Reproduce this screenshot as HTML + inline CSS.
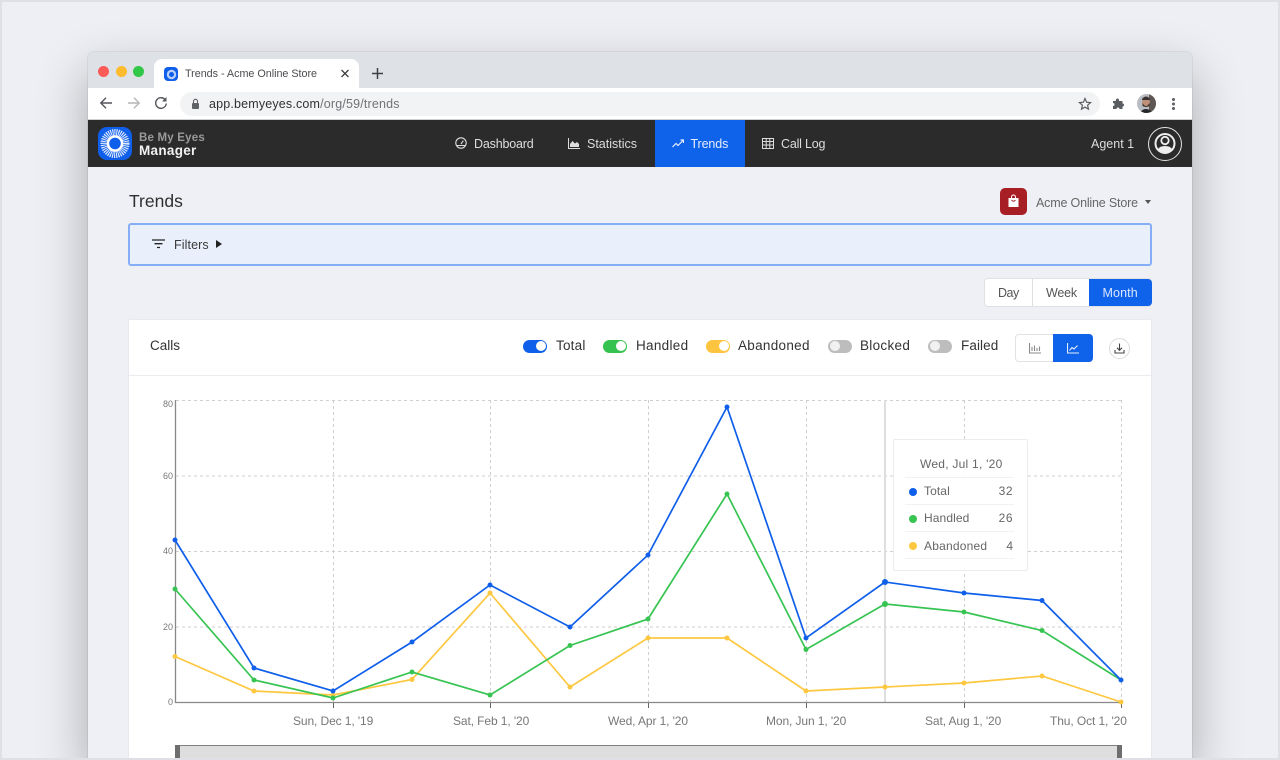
<!DOCTYPE html>
<html><head><meta charset="utf-8"><style>
html,body{margin:0;padding:0;width:1280px;height:760px;overflow:hidden}
#root{position:relative;width:1280px;height:760px;overflow:hidden;background:#eeeff4;font-family:"Liberation Sans",sans-serif;color:#333}
.a{position:absolute;white-space:nowrap}
.frame{position:absolute;left:0;top:0;width:1280px;height:760px;border:2px solid #dfdfe6;box-sizing:border-box;z-index:10;pointer-events:none}
.win{position:absolute;left:88px;top:52px;width:1104px;height:708px;background:#eff0f5;border-radius:5px 5px 0 0;box-shadow:0 0 1px rgba(0,0,0,.35),0 20px 50px rgba(0,0,0,.3)}
.nav{font-size:12.5px;line-height:16px;color:#ddd}
.tog{position:absolute;top:339.5px;width:24px;height:13.5px;border-radius:7px}
.tog i{position:absolute;top:1.75px;right:1.5px;width:10px;height:10px;border-radius:50%;background:#fff}
.tog.off{background:#bdbdbd}.tog.off i{right:auto;left:1.5px;background:#f1f1f1}
.lbl{font-size:13.5px;line-height:16px;color:#333;top:338px;letter-spacing:.3px}
.tick{font-size:12px;color:#777;top:714px;line-height:14px;letter-spacing:-.1px}
.yt{font-size:9px;color:#777;line-height:10px;text-align:right;width:20px;left:153px}
</style></head><body><div id="root">
<div class="win"></div>
<div class="a" style="left:88px;top:52px;width:1104px;height:36px;background:#dee1e6;border-radius:5px 5px 0 0"></div>
<div class="a" style="left:98px;top:65.5px;width:11px;height:11px;border-radius:50%;background:#fc5a57"></div>
<div class="a" style="left:115.5px;top:65.5px;width:11px;height:11px;border-radius:50%;background:#fdbb2e"></div>
<div class="a" style="left:132.5px;top:65.5px;width:11px;height:11px;border-radius:50%;background:#33c748"></div>
<div class="a" style="left:154px;top:59px;width:205px;height:29px;background:#fff;border-radius:8px 8px 0 0"></div>
<div class="a" style="left:164px;top:67px;width:14px;height:14px;border-radius:4px;background:#0f5fea"></div>
<div class="a" style="left:168.5px;top:71.5px;width:5px;height:5px;border-radius:50%;background:#0f5fea;box-shadow:0 0 0 2.2px #b8d0fb"></div>
<div class="a" style="left:185px;top:67px;font-size:10.8px;line-height:14px;color:#4a4c50;letter-spacing:-.03px">Trends - Acme Online Store</div>
<svg class="a" style="left:340px;top:68px" width="10" height="11" viewBox="0 0 10 11"><path d="M1.5 2L8.5 9M8.5 2L1.5 9" stroke="#3c3f43" stroke-width="1.3" fill="none"/></svg>
<svg class="a" style="left:371px;top:67px" width="13" height="13" viewBox="0 0 13 13"><path d="M6.5 1V12M1 6.5H12" stroke="#3c3f43" stroke-width="1.5" fill="none"/></svg>
<div class="a" style="left:88px;top:88px;width:1104px;height:31px;background:#fff;border-bottom:1px solid #d0d1d4"></div>
<svg class="a" style="left:99px;top:96px" width="14" height="14" viewBox="0 0 14 14"><path d="M13 7H2M7 1.800L1.800 7L7 12.200" stroke="#54575b" stroke-width="1.400" fill="none"/></svg>
<svg class="a" style="left:127px;top:96px" width="14" height="14" viewBox="0 0 14 14"><path d="M1 7H12M7 1.800L12.200 7L7 12.200" stroke="#b4b6b9" stroke-width="1.400" fill="none"/></svg>
<svg class="a" style="left:154px;top:96px" width="14" height="14" viewBox="0 0 14 14"><path d="M11.500 4.200A5.300 5.300 0 1 0 12.300 7.500" stroke="#54575b" stroke-width="1.400" fill="none"/><path d="M12.500 1V5.500H8Z" fill="#54575b"/></svg>
<div class="a" style="left:180px;top:92px;width:920px;height:24px;border-radius:12px;background:#f1f3f4"></div>
<svg class="a" style="left:191px;top:98px" width="9" height="12" viewBox="0 0 9 12"><path d="M2.500 5V3.300a2 2 0 0 1 4 0V5" stroke="#5f6368" stroke-width="1.100" fill="none"/><rect x="1" y="5" width="7" height="6" rx="1" fill="#5f6368"/></svg>
<div class="a" style="left:209px;top:96px;font-size:12.5px;line-height:16px;color:#303134;letter-spacing:.17px">app.bemyeyes.com<span style="color:#717377">/org/59/trends</span></div>
<svg class="a" style="left:1078px;top:97px" width="14" height="14" viewBox="0 0 14 14"><path d="M7 1.500L8.600 5.200L12.600 5.600L9.600 8.200L10.500 12.200L7 10.100L3.500 12.200L4.400 8.200L1.400 5.600L5.400 5.200Z" stroke="#5a5d61" stroke-width="1.200" fill="none"/></svg>
<svg class="a" style="left:1112px;top:97px" width="14" height="13" viewBox="0 0 14 13"><path d="M1 4H4A1.500 1.500 0 0 1 7 2.500V4H10.500V6.500A1.500 1.500 0 0 1 10.500 9.500V12H7.500A1.500 1.500 0 0 0 4.500 12H1V9A1.500 1.500 0 0 0 1 6Z" fill="#5a5d61"/></svg>
<svg class="a" style="left:1137px;top:94px" width="19" height="19" viewBox="0 0 19 19"><defs><clipPath id="c"><circle cx="9.500" cy="9.500" r="9.500"/></clipPath></defs><g clip-path="url(#c)"><rect width="19" height="19" fill="#b9bcc2"/><rect x="12" width="7" height="19" fill="#5d5652"/><ellipse cx="9" cy="8" rx="4" ry="5" fill="#bd8f78"/><path d="M5 5Q9 0 13 5V6H5Z" fill="#3a3230"/><path d="M5.500 9Q9 15 12.500 9L12.500 12Q9 14 5.500 12Z" fill="#3f332e"/><path d="M2 19Q9 11 16 19Z" fill="#26272a"/></g></svg>
<div class="a" style="left:1172px;top:98px;width:3px;height:3px;border-radius:50%;background:#5a5d61;box-shadow:0 4.500px 0 #5a5d61,0 9px 0 #5a5d61"></div>

<div class="a" style="left:88px;top:120px;width:1104px;height:47px;background:#2b2b2b"></div>
<div class="a" style="left:655px;top:120px;width:90px;height:47px;background:#0f62ea"></div>
<svg class="a" style="left:98px;top:127px" width="34" height="33" viewBox="0 0 34 33"><rect width="34" height="33" rx="9" fill="#0f5fea"/><circle cx="17" cy="16.500" r="10.500" fill="none" stroke="#dfe9ff" stroke-width="8" stroke-dasharray="1 .8"/><circle cx="17" cy="16.500" r="7" fill="none" stroke="#fff" stroke-width="2.500"/><circle cx="17" cy="16.500" r="5.600" fill="#0f5fea"/></svg>
<div class="a" style="left:139px;top:131px;font-size:11.5px;line-height:14px;font-weight:700;color:#9a9a9a;letter-spacing:.2px">Be My Eyes</div>
<div class="a" style="left:139px;top:143px;font-size:13.5px;line-height:16px;font-weight:700;color:#f2f2f2;letter-spacing:.3px">Manager</div>

<svg class="a" style="left:455px;top:137px" width="12" height="12" viewBox="0 0 12 12"><circle cx="6" cy="6" r="5.200" fill="none" stroke="#ddd" stroke-width="1.100"/><path d="M1 8.500H11M6 7L8.300 3.700" stroke="#ddd" stroke-width="1.100"/></svg>
<div class="a nav" style="left:474px;top:136px;letter-spacing:-.18px">Dashboard</div>
<svg class="a" style="left:568px;top:138px" width="12" height="11" viewBox="0 0 12 11"><path d="M.5 0V10.500H12" stroke="#ddd" fill="none"/><path d="M2 9V6L4.500 3L7 5.500L9 4L11 6V9Z" fill="#ddd"/></svg>
<div class="a nav" style="left:587px;top:136px">Statistics</div>
<svg class="a" style="left:671.5px;top:139px" width="12" height="9" viewBox="0 0 12 9"><path d="M.5 8L4 4.500L6 6.500L11 1.500M8.500 1H11.500V4" stroke="#e6eeff" stroke-width="1.200" fill="none"/></svg>
<div class="a nav" style="left:690.5px;top:136px;color:#e6eeff;letter-spacing:-.12px">Trends</div>
<svg class="a" style="left:762px;top:138px" width="12" height="11" viewBox="0 0 12 11"><path d="M.5.500H11.500V10.500H.5ZM.5 3.500H11.500M.5 7H11.500M4.200 .5V10.500M7.800 .5V10.500" stroke="#ddd" fill="none"/></svg>
<div class="a nav" style="left:781px;top:136px;letter-spacing:-.2px">Call Log</div>
<div class="a nav" style="left:1091px;top:136px;letter-spacing:0">Agent 1</div>
<svg class="a" style="left:1148px;top:127px" width="34" height="34" viewBox="0 0 34 34"><circle cx="17" cy="17" r="16.500" fill="none" stroke="#e4e4e4"/><circle cx="17" cy="16.500" r="9.500" fill="#2b2b2b" stroke="#eee" stroke-width="2"/><circle cx="17" cy="13.500" r="3.700" fill="none" stroke="#eee" stroke-width="1.800"/><path d="M10 22Q12 19 17 19T24 22Q21 25.500 17 25.500T10 22Z" fill="#eee"/></svg>

<div class="a" style="left:129px;top:191px;font-size:17.5px;line-height:21px;color:#2f2f2f">Trends</div>
<div class="a" style="left:1000px;top:188px;width:27px;height:27px;border-radius:5px;background:#a71f24"></div>
<svg class="a" style="left:1007px;top:194px" width="13" height="14" viewBox="0 0 13 14"><path d="M4.500 4V3a2 2 0 0 1 4 0V4" stroke="#fff" fill="none"/><path d="M1.500 4H11.500V13H1.500Z" fill="#fff"/><path d="M4.500 6Q6.500 8.500 8.500 6" stroke="#a71f24" fill="none"/></svg>
<div class="a" style="left:1036px;top:194.5px;font-size:12.5px;line-height:16px;color:#666;letter-spacing:-.18px">Acme Online Store</div>
<div class="a" style="left:1145px;top:200px;width:0;height:0;border:3.5px solid transparent;border-top:4px solid #555;border-bottom:0"></div>

<div class="a" style="left:128px;top:223px;width:1024px;height:43px;box-sizing:border-box;background:#e9f0fc;border:2px solid #84aef5;border-radius:3px"></div>
<svg class="a" style="left:152px;top:239px" width="13" height="10" viewBox="0 0 13 10"><path d="M0 1H13M2.500 4.700H10.500M5 8.500H8" stroke="#222" stroke-width="1.300"/></svg>
<div class="a" style="left:174px;top:236.5px;font-size:12.5px;line-height:16px;color:#3a3a3a;letter-spacing:.1px">Filters</div>
<div class="a" style="left:216px;top:240px;width:0;height:0;border:4px solid transparent;border-left:6px solid #222;border-right:0"></div>

<div class="a" style="left:984px;top:278px;width:168px;height:29px;background:#fff;border:1px solid #e0e1e5;border-radius:4px;box-sizing:border-box"></div>
<div class="a" style="left:1032px;top:279px;width:1px;height:27px;background:#dedede"></div>
<div class="a" style="left:1089px;top:279px;width:62.5px;height:27px;background:#0f62ea;border-radius:0 4px 4px 0"></div>
<div class="a" style="left:998px;top:285px;font-size:12.5px;line-height:16px;color:#555;letter-spacing:-.5px">Day</div>
<div class="a" style="left:1046px;top:285px;font-size:12.5px;line-height:16px;color:#555;letter-spacing:-.2px">Week</div>
<div class="a" style="left:1102.5px;top:285px;font-size:12.5px;line-height:16px;color:#dce8ff;letter-spacing:.1px">Month</div>

<div class="a" style="left:129px;top:320px;width:1022px;height:445px;background:#fff;box-shadow:0 0 1px rgba(0,0,0,.15)"></div>
<div class="a" style="left:129px;top:375px;width:1022px;height:1px;background:#ececef"></div>
<div class="a" style="left:150px;top:338px;font-size:13.5px;line-height:16px;color:#333">Calls</div>

<div class="tog" style="left:523px;background:#0f5fea"><i></i></div><div class="a lbl" style="left:556px;letter-spacing:.2px">Total</div>
<div class="tog" style="left:603px;background:#35c24f"><i></i></div><div class="a lbl" style="left:636px">Handled</div>
<div class="tog" style="left:706px;background:#fdc43f"><i></i></div><div class="a lbl" style="left:738px">Abandoned</div>
<div class="tog off" style="left:828px"><i></i></div><div class="a lbl" style="left:860px">Blocked</div>
<div class="tog off" style="left:928px"><i></i></div><div class="a lbl" style="left:961px;letter-spacing:.1px">Failed</div>

<div class="a" style="left:1015px;top:334px;width:78px;height:28px;border:1px solid #e2e2e6;border-radius:4px;box-sizing:border-box;background:#fff"></div>
<div class="a" style="left:1053px;top:334px;width:40px;height:28px;background:#0f62ea;border-radius:0 4px 4px 0"></div>
<svg class="a" style="left:1029px;top:342px" width="12" height="12" viewBox="0 0 12 12"><path d="M.5 1V11H12M3 9V5M5.500 9V3.500M8 9V6M10.500 9V4.500" stroke="#888" stroke-width="1.100" fill="none"/></svg>
<svg class="a" style="left:1067px;top:342px" width="12" height="12" viewBox="0 0 12 12"><path d="M.5 1V11H12M2.500 8.500L5 5.500L7 7L10.500 3.500" stroke="#e6eeff" stroke-width="1.100" fill="none"/></svg>
<svg class="a" style="left:1109px;top:338px" width="21" height="21" viewBox="0 0 21 21"><circle cx="10.500" cy="10.500" r="10" fill="#fff" stroke="#dcdcdc"/><path d="M10.500 5.500V12M8 9.800L10.500 12.300L13 9.800M6 12V15H15V12" stroke="#444" stroke-width="1.100" fill="none"/></svg>

<svg class="a" style="left:0;top:0" width="1280" height="760" viewBox="0 0 1280 760">
<g stroke="#cfcfcf" stroke-width="1" stroke-dasharray="3 3" fill="none">
<path d="M176 400.500H1121M176 476H1121M176 551.500H1121M176 627H1121"/>
<path d="M333.500 400V702M490.500 400V702M648.500 400V702M806.500 400V702M964.500 400V702M1121.500 400V702"/>
</g>
<path d="M885 400V702" stroke="#dedede" stroke-width="2"/>
<path d="M175.500 400V702.500H1121.500" stroke="#888" stroke-width="1.300" fill="none"/>
<path d="M333.500 703V708M490.500 703V708M648.500 703V708M806.500 703V708M964.500 703V708M1121.500 703V708" stroke="#666" fill="none"/>
<g fill="none" stroke-width="1.700">
<polyline stroke="#fdc840" points="175,656.500 254,691 333,695 412,679.500 490,593 570,687 648,638 727,638 806,691 885,687 964,683 1042,676 1121,702"/>
<polyline stroke="#37c452" points="175,589 254,680 333,698 412,672 490,695 570,645.500 648,619 727,494 806,649.500 885,604 964,612 1042,630.500 1121,680"/>
<polyline stroke="#0f5fea" points="175,540 254,668 333,691 412,642 490,585 570,627 648,555 727,407 806,638 885,582 964,593 1042,600.500 1121,680"/>
</g>
<g fill="#fdc840"><circle cx="175" cy="656.500" r="2.500"/><circle cx="254" cy="691" r="2.500"/><circle cx="333" cy="695" r="2.500"/><circle cx="412" cy="679.500" r="2.500"/><circle cx="490" cy="593" r="2.500"/><circle cx="570" cy="687" r="2.500"/><circle cx="648" cy="638" r="2.500"/><circle cx="727" cy="638" r="2.500"/><circle cx="806" cy="691" r="2.500"/><circle cx="885" cy="687" r="2.500"/><circle cx="964" cy="683" r="2.500"/><circle cx="1042" cy="676" r="2.500"/><circle cx="1121" cy="702" r="2.500"/></g>
<g fill="#37c452"><circle cx="175" cy="589" r="2.500"/><circle cx="254" cy="680" r="2.500"/><circle cx="333" cy="698" r="2.500"/><circle cx="412" cy="672" r="2.500"/><circle cx="490" cy="695" r="2.500"/><circle cx="570" cy="645.500" r="2.500"/><circle cx="648" cy="619" r="2.500"/><circle cx="727" cy="494" r="2.500"/><circle cx="806" cy="649.500" r="2.500"/><circle cx="885" cy="604" r="3"/><circle cx="964" cy="612" r="2.500"/><circle cx="1042" cy="630.500" r="2.500"/></g>
<g fill="#0f5fea"><circle cx="175" cy="540" r="2.500"/><circle cx="254" cy="668" r="2.500"/><circle cx="333" cy="691" r="2.500"/><circle cx="412" cy="642" r="2.500"/><circle cx="490" cy="585" r="2.500"/><circle cx="570" cy="627" r="2.500"/><circle cx="648" cy="555" r="2.500"/><circle cx="727" cy="407" r="2.500"/><circle cx="806" cy="638" r="2.500"/><circle cx="885" cy="582" r="3"/><circle cx="964" cy="593" r="2.500"/><circle cx="1042" cy="600.500" r="2.500"/><circle cx="1121" cy="680" r="2.500"/></g>
</svg>
<div class="a yt" style="top:399px">80</div>
<div class="a yt" style="top:471px">60</div>
<div class="a yt" style="top:546px">40</div>
<div class="a yt" style="top:622px">20</div>
<div class="a yt" style="top:697px">0</div>
<div class="a tick" style="left:293px">Sun, Dec 1, '19</div>
<div class="a tick" style="left:453px">Sat, Feb 1, '20</div>
<div class="a tick" style="left:608px">Wed, Apr 1, '20</div>
<div class="a tick" style="left:766px">Mon, Jun 1, '20</div>
<div class="a tick" style="left:925px">Sat, Aug 1, '20</div>
<div class="a tick" style="left:1050px">Thu, Oct 1, '20</div>

<div class="a" style="left:893px;top:439px;width:135px;height:132px;background:rgba(255,255,255,.95);border:1px solid #ececee;border-radius:2px;box-sizing:border-box"></div>
<div class="a" style="left:905px;top:477px;width:109px;height:1px;background:#f2f2f2"></div>
<div class="a" style="left:905px;top:504px;width:109px;height:1px;background:#f2f2f2"></div>
<div class="a" style="left:905px;top:531px;width:109px;height:1px;background:#f2f2f2"></div>
<div class="a" style="left:905px;top:558px;width:109px;height:1px;background:#f2f2f2"></div>
<div class="a" style="left:920px;top:457px;font-size:12px;line-height:15px;color:#666;letter-spacing:.25px">Wed, Jul 1, '20</div>
<div class="a" style="left:909px;top:487.5px;width:8px;height:8px;border-radius:50%;background:#0f5fea"></div>
<div class="a" style="left:909px;top:515px;width:8px;height:8px;border-radius:50%;background:#37c452"></div>
<div class="a" style="left:909px;top:542px;width:8px;height:8px;border-radius:50%;background:#fdc840"></div>
<div class="a" style="left:924px;top:484px;font-size:12px;line-height:15px;color:#666;letter-spacing:.1px">Total</div>
<div class="a" style="left:924px;top:511px;font-size:12px;line-height:15px;color:#666;letter-spacing:.1px">Handled</div>
<div class="a" style="left:924px;top:539px;font-size:12px;line-height:15px;color:#666;letter-spacing:.2px">Abandoned</div>
<div class="a" style="left:983px;width:30px;text-align:right;top:484px;font-size:12px;line-height:15px;color:#666;letter-spacing:.5px">32</div>
<div class="a" style="left:983px;width:30px;text-align:right;top:511px;font-size:12px;line-height:15px;color:#666;letter-spacing:.5px">26</div>
<div class="a" style="left:983px;width:30px;text-align:right;top:539px;font-size:12px;line-height:15px;color:#666">4</div>

<div class="a" style="left:175px;top:745px;width:947px;height:15px;background:#dedede;border-top:1px solid #808080;box-sizing:border-box"></div>
<div class="a" style="left:175px;top:745px;width:5px;height:15px;background:#6e6e6e"></div>
<div class="a" style="left:1117px;top:745px;width:5px;height:15px;background:#6e6e6e"></div>
<div class="frame"></div>
</div></body></html>
